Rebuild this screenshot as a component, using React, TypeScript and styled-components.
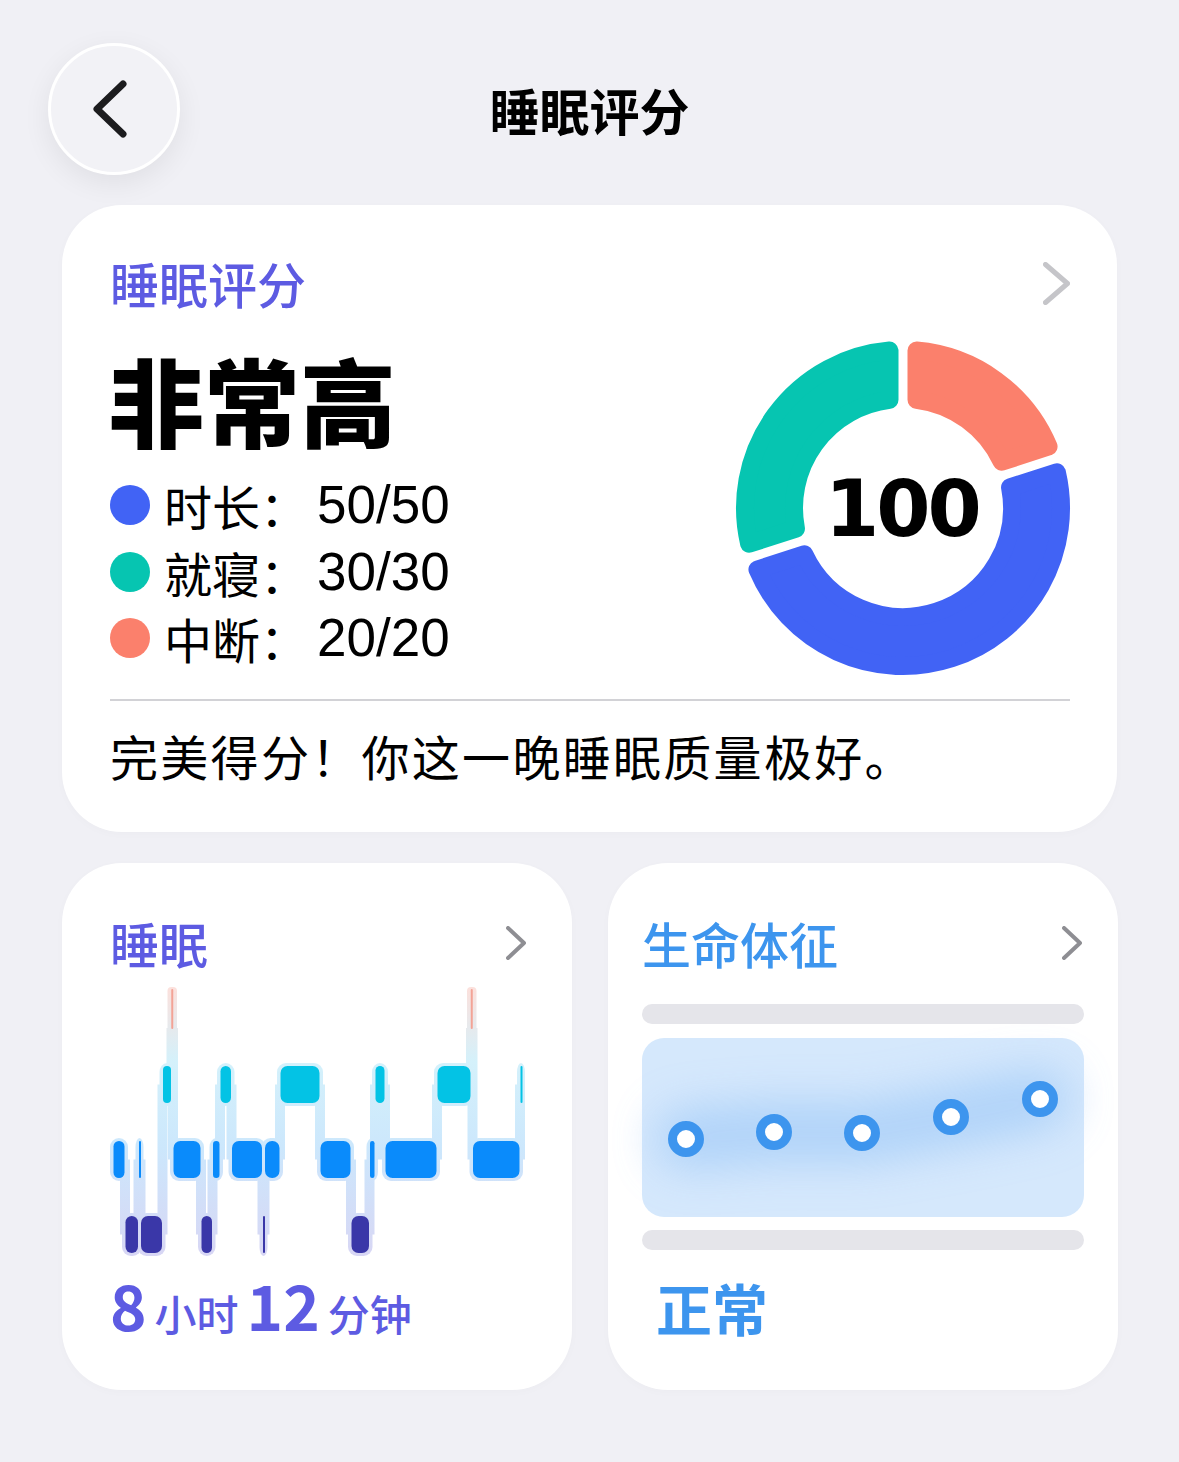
import React from "react";
import styled, { createGlobalStyle } from "styled-components";

const GlobalStyle = createGlobalStyle`
  html, body {
    margin: 0;
    padding: 0;
    background: #f0f0f5;
  }
  body {
    font-family: "Noto Sans CJK SC", "Noto Sans", sans-serif;
    color: #000;
  }
`;

const PURPLE = "#5d5be2";
const VITAL_BLUE = "#3d95ee";

// ---------- donut ----------

const CX = 170;
const CY = 170;
const R_OUT = 167;
const R_IN = 100;
const GAP = 9;
const CORNER = 9;

const pt = (r: number, deg: number) => {
  const a = (deg * Math.PI) / 180;
  return `${(CX + r * Math.sin(a)).toFixed(2)} ${(CY - r * Math.cos(a)).toFixed(2)}`;
};

// annular sector shrunk by CORNER; the round-joined stroke grows it back with soft corners
const sectorPath = (a0: number, a1: number) => {
  const ro = R_OUT - CORNER;
  const ri = R_IN + CORNER;
  const h = GAP / 2 + CORNER;
  const dO = (Math.asin(h / ro) * 180) / Math.PI;
  const dI = (Math.asin(h / ri) * 180) / Math.PI;
  const large = a1 - a0 - 2 * dO > 180 ? 1 : 0;
  return [
    `M ${pt(ro, a0 + dO)}`,
    `A ${ro} ${ro} 0 ${large} 1 ${pt(ro, a1 - dO)}`,
    `L ${pt(ri, a1 - dI)}`,
    `A ${ri} ${ri} 0 ${large} 0 ${pt(ri, a0 + dI)}`,
    "Z",
  ].join(" ");
};

const donutParts = [
  { from: 0, to: 72, color: "#fb806c" },
  { from: 72, to: 252, color: "#4163f5" },
  { from: 252, to: 360, color: "#06c5b1" },
];

const Donut = () => (
  <DonutSvg width="340" height="340" viewBox="0 0 340 340">
    {donutParts.map((p) => (
      <path
        key={p.from}
        d={sectorPath(p.from, p.to)}
        fill={p.color}
        stroke={p.color}
        strokeWidth={CORNER * 2}
        strokeLinejoin="round"
      />
    ))}
    <ScoreText x={CX - 1} y={CY + 1} textAnchor="middle" dominantBaseline="central">
      100
    </ScoreText>
  </DonutSvg>
);

// ---------- hypnogram ----------

type Stage = "awake" | "rem" | "light" | "deep";

const LEVEL_Y: Record<Stage, number> = {
  awake: 1010,
  rem: 1066,
  light: 1141,
  deep: 1216,
};
const BLOCK_H = 37;

const STAGE_FILL: Record<Stage, string> = {
  awake: "#f3a396",
  rem: "#03c3e5",
  light: "#0a8bfb",
  deep: "#3a37a8",
};

const night: [number, number, Stage][] = [
  [113, 125, "light"],
  [125, 138.5, "deep"],
  [138.5, 140.5, "light"],
  [140.5, 162.5, "deep"],
  [162.5, 171.5, "rem"],
  [171.5, 173, "awake"],
  [173, 201, "light"],
  [201, 212.5, "deep"],
  [212.5, 220, "light"],
  [220, 231.5, "rem"],
  [231.5, 262.5, "light"],
  [262.5, 264.5, "deep"],
  [264.5, 280, "light"],
  [280, 320, "rem"],
  [320, 351, "light"],
  [351, 369.5, "deep"],
  [369.5, 375, "light"],
  [375, 385, "rem"],
  [385, 437, "light"],
  [437, 471, "rem"],
  [471, 472.5, "awake"],
  [472.5, 520, "light"],
  [520, 522, "rem"],
];

const centerY = (s: Stage) => (s === "awake" ? 1028 : LEVEL_Y[s] + BLOCK_H / 2);

const Hypnogram = () => {
  const links = night.slice(1).map((seg, i) => {
    const prev = night[i];
    return { x: seg[0], y0: centerY(prev[2]), y1: centerY(seg[2]) };
  });
  return (
    <ChartSvg width="416" height="275" viewBox="110 985 416 275">
      <defs>
        <linearGradient id="halo" gradientUnits="userSpaceOnUse" x1="0" y1="985" x2="0" y2="1258">
          <stop offset="0" stopColor="#fde0db" />
          <stop offset="0.28" stopColor="#d4f1fb" />
          <stop offset="0.6" stopColor="#cce7fc" />
          <stop offset="1" stopColor="#d8d6f4" />
        </linearGradient>
      </defs>
      {links.map((l, i) => (
        <rect
          key={`l${i}`}
          x={l.x - 5}
          y={Math.min(l.y0, l.y1)}
          width="10"
          height={Math.abs(l.y1 - l.y0)}
          fill="url(#halo)"
        />
      ))}
      {night.map(([x0, x1, s], i) =>
        s === "awake" ? (
          <rect key={`h${i}`} x={x0 - 4} y={987} width={x1 - x0 + 8} height={80} rx="4" fill="url(#halo)" />
        ) : (
          <rect
            key={`h${i}`}
            x={x0 - 3}
            y={LEVEL_Y[s] - 3}
            width={x1 - x0 + 6}
            height={BLOCK_H + 6}
            rx="9"
            fill="url(#halo)"
          />
        )
      )}
      {night.map(([x0, x1, s], i) => {
        if (s === "awake") {
          return <rect key={`b${i}`} x={(x0 + x1) / 2 - 1} y={989} width="2" height="40" rx="1" fill={STAGE_FILL.awake} />;
        }
        const w = Math.max(x1 - x0 - 1, 2);
        return (
          <rect
            key={`b${i}`}
            x={x0 + 0.5}
            y={LEVEL_Y[s]}
            width={w}
            height={BLOCK_H}
            rx={Math.min(7, w / 2)}
            fill={STAGE_FILL[s]}
          />
        );
      })}
    </ChartSvg>
  );
};

// ---------- vitals ----------

const vitalDots = [
  [44, 101],
  [132, 94],
  [220, 95],
  [309, 79],
  [398, 61],
];

const VitalsChart = () => (
  <VitalsSvg width="442" height="179" viewBox="0 0 442 179">
    <defs>
      <filter id="glow" filterUnits="userSpaceOnUse" x="-80" y="-80" width="600" height="340">
        <feGaussianBlur stdDeviation="22" />
      </filter>
    </defs>
    <polyline
      points={vitalDots.map((d) => d.join(",")).join(" ")}
      fill="none"
      stroke="#a6cdf8"
      strokeWidth="60"
      strokeLinecap="round"
      strokeLinejoin="round"
      filter="url(#glow)"
      opacity="0.8"
    />
    {vitalDots.map(([x, y]) => (
      <circle key={x} cx={x} cy={y} r="13.5" fill="#fff" stroke={VITAL_BLUE} strokeWidth="9" />
    ))}
  </VitalsSvg>
);

// ---------- icons ----------

const Chevron = ({ w, h, color, stroke }: { w: number; h: number; color: string; stroke: number }) => (
  <svg width={w + stroke} height={h + stroke} viewBox={`${-stroke / 2} ${-stroke / 2} ${w + stroke} ${h + stroke}`}>
    <polyline
      points={`0,0 ${w},${h / 2} 0,${h}`}
      fill="none"
      stroke={color}
      strokeWidth={stroke}
      strokeLinecap="round"
      strokeLinejoin="round"
    />
  </svg>
);

const BackIcon = () => (
  <svg width="44" height="62" viewBox="0 0 44 62">
    <polyline
      points="35,6 9,31 35,56"
      fill="none"
      stroke="#1c1c1e"
      strokeWidth="7"
      strokeLinecap="round"
      strokeLinejoin="round"
    />
  </svg>
);

const legend = [
  { label: "时长：", value: "50/50", color: "#4163f5" },
  { label: "就寝：", value: "30/30", color: "#06c5b1" },
  { label: "中断：", value: "20/20", color: "#fb806c" },
];

export default function App() {
  return (
    <Page>
      <GlobalStyle />
      <Header>
        <BackButton aria-label="返回">
          <BackIcon />
        </BackButton>
        <PageTitle>睡眠评分</PageTitle>
        <span />
      </Header>

      <Content>
        <ScoreCard>
          <CardHead>
            <CardTitle color={PURPLE}>睡眠评分</CardTitle>
            <Chevron w={22} h={38} color="#c5c5c9" stroke={5} />
          </CardHead>
          <ScoreBody>
            <ScoreLeft>
              <Verdict>非常高</Verdict>
              <Legend>
                {legend.map((row) => (
                  <LegendRow key={row.label}>
                    <Dot color={row.color} />
                    <LegendLabel>{row.label}</LegendLabel>
                    <LegendValue>{row.value}</LegendValue>
                  </LegendRow>
                ))}
              </Legend>
            </ScoreLeft>
            <Donut />
          </ScoreBody>
          <Divider />
          <Summary>完美得分！你这一晚睡眠质量极好。</Summary>
        </ScoreCard>

        <TileGrid>
          <Tile>
            <CardHead>
              <CardTitle color={PURPLE}>睡眠</CardTitle>
              <Chevron w={16} h={30} color="#8e8e93" stroke={4} />
            </CardHead>
            <Hypnogram />
            <Duration>
              <Num>8</Num>
              <Unit>小时</Unit>
              <Num>12</Num>
              <Unit>分钟</Unit>
            </Duration>
          </Tile>

          <Tile $inset>
            <CardHead $pad>
              <CardTitle color={VITAL_BLUE}>生命体征</CardTitle>
              <Chevron w={16} h={30} color="#8e8e93" stroke={4} />
            </CardHead>
            <RangeBar $top={33} />
            <VitalsPanel>
              <VitalsChart />
            </VitalsPanel>
            <RangeBar $top={13} />
            <Status>正常</Status>
          </Tile>
        </TileGrid>
      </Content>
    </Page>
  );
}

// ---------- styles ----------

const Page = styled.div`
  width: 1179px;
  min-height: 1462px;
  background: #f0f0f5;
  padding-top: 43px;
  box-sizing: border-box;
`;

const Header = styled.header`
  display: grid;
  grid-template-columns: 132px 1fr 132px;
  align-items: center;
  padding: 0 48px;
  height: 132px;
`;

const BackButton = styled.button`
  width: 132px;
  height: 132px;
  border-radius: 50%;
  background: #f2f2f6;
  border: 3px solid #fff;
  box-sizing: border-box;
  box-shadow: 0 8px 28px rgba(0, 0, 0, 0.07);
  display: flex;
  align-items: center;
  justify-content: center;
  padding: 0 8px 0 0;
  cursor: pointer;
`;

const PageTitle = styled.h1`
  margin: 0;
  text-align: center;
  font-size: 50px;
  font-weight: 600;
  line-height: 60px;
  color: #000;
`;

const Content = styled.main`
  padding: 30px 62px 0;
  display: flex;
  flex-direction: column;
  gap: 31px;
`;

const ScoreCard = styled.section`
  height: 627px;
  box-sizing: border-box;
  background: #fff;
  border-radius: 60px;
  padding: 50px 47px 0 48px;
  box-shadow: 0 2px 10px rgba(0, 0, 0, 0.02);
`;

const CardHead = styled.div<{ $pad?: boolean }>`
  display: flex;
  align-items: center;
  justify-content: space-between;
  height: 56px;
  padding: ${(p) => (p.$pad ? "0 2px 0 0" : "0")};
`;

const CardTitle = styled.h2<{ color: string }>`
  margin: 0;
  font-size: 49px;
  font-weight: 500;
  line-height: 56px;
  color: ${(p) => p.color};
`;

const ScoreBody = styled.div`
  display: flex;
  justify-content: space-between;
  align-items: flex-start;
  margin-top: 27px;
  height: 340px;
`;

const ScoreLeft = styled.div`
  padding-top: 11px;
`;

const Verdict = styled.div`
  font-size: 96px;
  font-weight: 900;
  line-height: 100px;
  letter-spacing: 0;
  margin-left: -2px;
`;

const Legend = styled.div`
  margin-top: 23px;
`;

const LegendRow = styled.div`
  display: flex;
  align-items: center;
  height: 66.5px;
`;

const Dot = styled.span<{ color: string }>`
  width: 40px;
  height: 40px;
  border-radius: 50%;
  background: ${(p) => p.color};
  margin-right: 14px;
  flex: none;
`;

const LegendLabel = styled.span`
  font-size: 48px;
  line-height: 56px;
`;

const LegendValue = styled.span`
  font-family: "Liberation Sans", "Noto Sans", sans-serif;
  font-size: 53px;
  line-height: 56px;
  margin-left: 9px;
`;

const DonutSvg = styled.svg`
  display: block;
  margin-right: -3px;
`;

const ScoreText = styled.text`
  font-family: "DejaVu Sans", sans-serif;
  font-weight: 700;
  font-size: 78px;
  letter-spacing: -3px;
  fill: #000;
`;

const Divider = styled.hr`
  margin: 21px 0 0;
  border: 0;
  height: 1.5px;
  background: #d2d2d6;
`;

const Summary = styled.p`
  margin: 26px 0 0;
  font-size: 48px;
  line-height: 56px;
  font-weight: 400;
  letter-spacing: 2.3px;
`;

const TileGrid = styled.div`
  display: grid;
  grid-template-columns: 1fr 1fr;
  gap: 36px;
`;

const Tile = styled.section<{ $inset?: boolean }>`
  height: 527px;
  box-sizing: border-box;
  background: #fff;
  border-radius: 60px;
  padding: ${(p) => (p.$inset ? "52px 34px 0" : "52px 46px 0 48px")};
  box-shadow: 0 2px 10px rgba(0, 0, 0, 0.02);
`;

const ChartSvg = styled.svg`
  display: block;
  margin-top: 14px;
  overflow: visible;
`;

const Duration = styled.div`
  display: flex;
  align-items: baseline;
  margin-top: 10px;
  color: ${PURPLE};
  line-height: 68px;
`;

const Num = styled.span`
  font-size: 62px;
  font-weight: 700;
  margin-right: 8px;
`;

const Unit = styled.span`
  font-size: 42px;
  font-weight: 500;
  margin-right: 8px;
`;

const RangeBar = styled.div<{ $top: number }>`
  margin-top: ${(p) => p.$top}px;
  height: 20px;
  border-radius: 10px;
  background: #e5e5ea;
`;

const VitalsPanel = styled.div`
  margin-top: 14px;
  height: 179px;
  border-radius: 22px;
  background: #d5e8fc;
`;

const VitalsSvg = styled.svg`
  display: block;
  overflow: visible;
`;

const Status = styled.div`
  margin-top: 25px;
  padding-left: 14px;
  font-size: 56px;
  font-weight: 700;
  line-height: 64px;
  color: ${VITAL_BLUE};
`;
